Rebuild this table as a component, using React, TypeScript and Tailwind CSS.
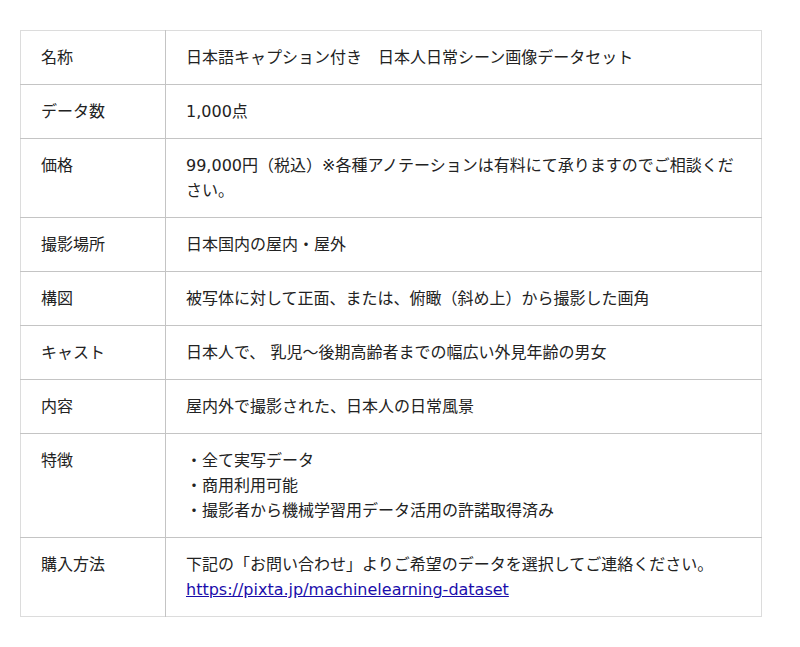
import React from 'react';

interface Row {
  label: string;
  value: React.ReactNode;
}

const rows: Row[] = [
  { label: '名称', value: '日本語キャプション付き　日本人日常シーン画像データセット' },
  { label: 'データ数', value: '1,000点' },
  {
    label: '価格',
    value: '99,000円（税込）※各種アノテーションは有料にて承りますのでご相談ください。'
  },
  { label: '撮影場所', value: '日本国内の屋内・屋外' },
  { label: '構図', value: '被写体に対して正面、または、俯瞰（斜め上）から撮影した画角' },
  { label: 'キャスト', value: '日本人で、 乳児〜後期高齢者までの幅広い外見年齢の男女' },
  { label: '内容', value: '屋内外で撮影された、日本人の日常風景' },
  {
    label: '特徴',
    value: (
      <>
        ・全て実写データ
        <br />
        ・商用利用可能
        <br />
        ・撮影者から機械学習用データ活用の許諾取得済み
      </>
    )
  },
  {
    label: '購入方法',
    value: (
      <>
        下記の「お問い合わせ」よりご希望のデータを選択してご連絡ください。
        <br />
        <a href="#" className="text-[#1a0dab] underline">
          https://pixta.jp/machinelearning-dataset
        </a>
      </>
    )
  }
];

const App: React.FC = () => {
  return (
    <div className="min-h-[647px] bg-white px-5 pt-[30px] font-['DejaVu_Sans','Noto_Sans_CJK_JP',sans-serif] text-[16px] leading-[25px] text-[#222]">
      <table className="w-[742px] border-collapse border border-[#dcdcdc]">
        <tbody>
          {rows.map((row, i) => (
            <tr key={i} className={i > 0 ? 'border-t border-[#c4c4c4]' : ''}>
              <td className="w-[145px] border-r border-[#c4c4c4] px-5 py-[14px] align-top">
                {row.label}
              </td>
              <td className="px-5 py-[14px] align-top">{row.value}</td>
            </tr>
          ))}
        </tbody>
      </table>
    </div>
  );
};

export default App;
